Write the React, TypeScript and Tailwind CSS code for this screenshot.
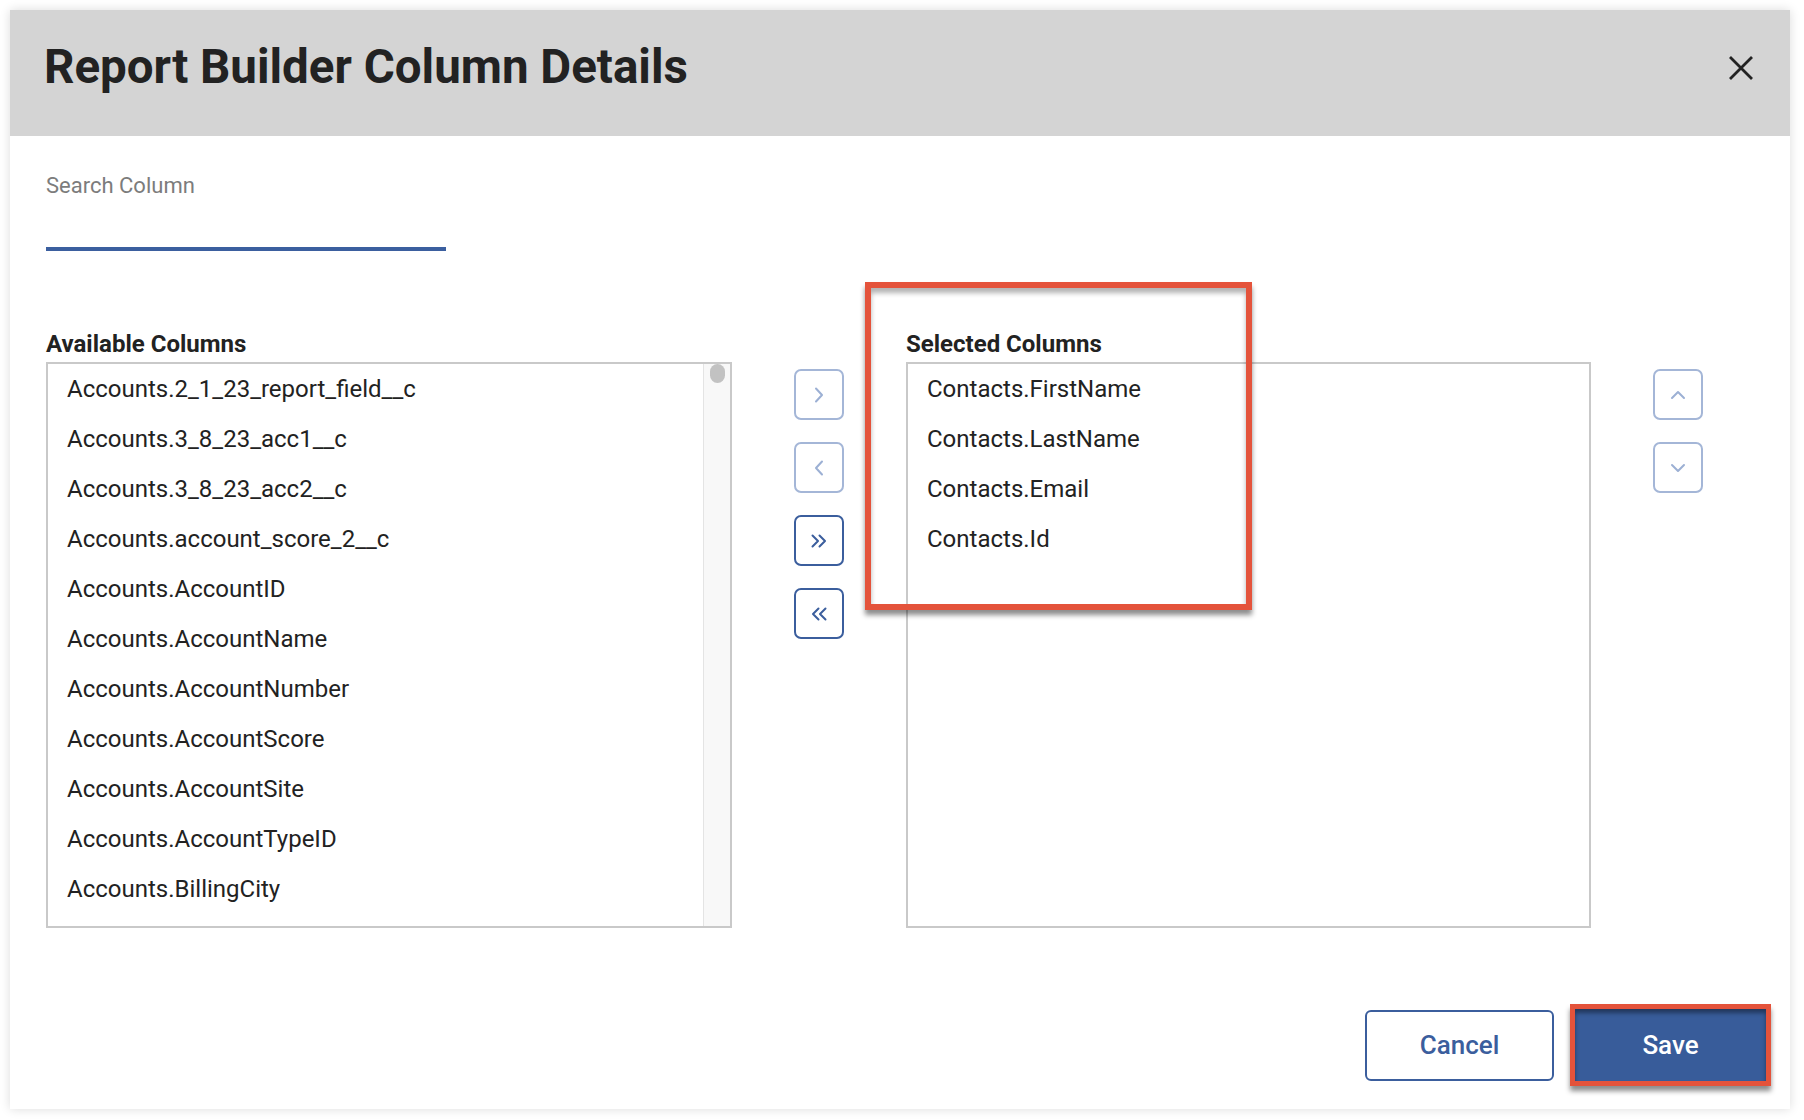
import React from 'react'

const available = [
  'Accounts.2_1_23_report_field__c',
  'Accounts.3_8_23_acc1__c',
  'Accounts.3_8_23_acc2__c',
  'Accounts.account_score_2__c',
  'Accounts.AccountID',
  'Accounts.AccountName',
  'Accounts.AccountNumber',
  'Accounts.AccountScore',
  'Accounts.AccountSite',
  'Accounts.AccountTypeID',
  'Accounts.BillingCity',
]

const selected = ['Contacts.FirstName', 'Contacts.LastName', 'Contacts.Email', 'Contacts.Id']

type Kind = 'right' | 'left' | 'dright' | 'dleft' | 'up' | 'down'

function Chevron({ kind }: { kind: Kind }) {
  const common = {
    fill: 'none',
    stroke: 'currentColor',
    strokeWidth: 2,
    strokeLinecap: 'round' as const,
    strokeLinejoin: 'round' as const,
  }
  if (kind === 'right' || kind === 'left') {
    return (
      <svg width="12" height="16" viewBox="0 0 12 16" {...common}>
        <path d={kind === 'right' ? 'M3 1.5 L9 8 L3 14.5' : 'M9 1.5 L3 8 L9 14.5'} />
      </svg>
    )
  }
  if (kind === 'dright' || kind === 'dleft') {
    return (
      <svg width="18" height="16" viewBox="0 0 18 16" {...common}>
        <path
          d={
            kind === 'dright'
              ? 'M2.5 2.5 L8 8 L2.5 13.5 M9.5 2.5 L15 8 L9.5 13.5'
              : 'M8.5 2.5 L3 8 L8.5 13.5 M15.5 2.5 L10 8 L15.5 13.5'
          }
        />
      </svg>
    )
  }
  return (
    <svg width="16" height="12" viewBox="0 0 16 12" {...common}>
      <path d={kind === 'up' ? 'M2 9 L8 3 L14 9' : 'M2 3 L8 9 L14 3'} />
    </svg>
  )
}

function MoveButton({ kind, active }: { kind: Kind; active?: boolean }) {
  return (
    <button
      type="button"
      className={`w-[50px] h-[51px] rounded-[7px] border-2 bg-white flex items-center justify-center ${
        active ? 'border-[#3b5e9d] text-[#3b5e9d]' : 'border-[#a4b6d7] text-[#9cb0d4]'
      }`}
    >
      <Chevron kind={kind} />
    </button>
  )
}

export default function App() {
  return (
    <div className="min-h-screen bg-white p-[10px] font-[Roboto,sans-serif] text-[#222]">
      <div className="relative w-[1780px] bg-white shadow-[0_0_10px_rgba(0,0,0,0.14)] flex flex-col">
        {/* Header */}
        <div className="h-[126px] bg-[#d4d4d4] flex items-center justify-between pl-[34px] pr-[36px] pb-[10px]">
          <h1 className="text-[47.5px] leading-none font-bold text-[#222]">Report Builder Column Details</h1>
          <button type="button" className="text-[#222]">
            <svg width="26" height="26" viewBox="0 0 26 26" fill="none" stroke="currentColor" strokeWidth="2.8">
              <path d="M2 2 L24 24 M24 2 L2 24" />
            </svg>
          </button>
        </div>

        {/* Body */}
        <div className="pl-[36px] pt-[37px]">
          <div className="w-[400px] border-b-[4px] border-[#3b5f9f]">
            <div className="text-[22px] leading-[26px] text-[#7c7c7c]">Search Column</div>
            <div className="h-[48px]" />
          </div>

          <div className="mt-[80px] grid grid-cols-[686px_50px_685px_50px] gap-x-[62px]">
            <div className="text-[24px] leading-[26px] font-bold mb-[5px]">Available Columns</div>
            <div />
            <div className="text-[24px] leading-[26px] font-bold mb-[5px]">Selected Columns</div>
            <div />

            {/* Available list */}
            <div className="h-[566px] border-2 border-[#c9c9c9] flex overflow-hidden">
              <div className="flex-1 overflow-hidden">
                {available.map((c) => (
                  <div key={c} className="h-[50px] leading-[50px] text-[24px] pl-[19px] whitespace-nowrap">
                    {c}
                  </div>
                ))}
              </div>
              <div className="w-[27px] border-l border-[#e4e4e4] bg-[#f8f8f8] flex justify-center">
                <div className="w-[15px] h-[19px] rounded-full bg-[#c2c2c2]" />
              </div>
            </div>

            {/* Move buttons */}
            <div className="pt-[7px] flex flex-col gap-[22px]">
              <MoveButton kind="right" />
              <MoveButton kind="left" />
              <MoveButton kind="dright" active />
              <MoveButton kind="dleft" active />
            </div>

            {/* Selected list */}
            <div className="h-[566px] border-2 border-[#c9c9c9] overflow-hidden">
              {selected.map((c) => (
                <div key={c} className="h-[50px] leading-[50px] text-[24px] pl-[19px] whitespace-nowrap">
                  {c}
                </div>
              ))}
            </div>

            {/* Order buttons */}
            <div className="pt-[7px] flex flex-col gap-[22px]">
              <MoveButton kind="up" />
              <MoveButton kind="down" />
            </div>
          </div>
        </div>

        {/* Footer */}
        <div className="mt-[76px] pb-[23px] pr-[19px] flex items-center justify-end gap-[16px]">
          <button
            type="button"
            className="w-[189px] h-[71px] rounded-[6px] border-2 border-[#3b5e9d] bg-white text-[#3b5e9d] text-[26px] font-medium"
          >
            Cancel
          </button>
          <div className="border-[5px] border-[#e4533b] shadow-[0_5px_5px_rgba(0,0,0,0.45)]">
            <button
              type="button"
              className="w-[191px] h-[72px] bg-[#385c9a] text-white text-[26px] font-medium shadow-[inset_0_4px_4px_rgba(0,0,0,0.4)]"
            >
              Save
            </button>
          </div>
        </div>

        {/* Highlight annotation over selected columns */}
        <div className="absolute left-[855px] top-[272px] w-[387px] h-[328px] border-[6px] border-[#e4533b] shadow-[0_5px_5px_rgba(0,0,0,0.45),inset_0_5px_5px_rgba(0,0,0,0.3)] pointer-events-none" />
      </div>
    </div>
  )
}
